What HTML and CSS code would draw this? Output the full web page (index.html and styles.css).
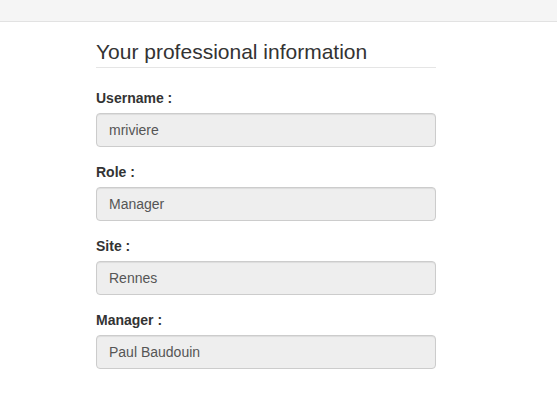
FILE: index.html
```html
<!DOCTYPE html>
<html lang="en">
<head>
<meta charset="utf-8">
<title>Your professional information</title>
<link rel="stylesheet" href="styles.css">
</head>
<body>
<div class="topbar"></div>
<main class="container">
  <form class="profile">
    <fieldset>
      <legend>Your professional information</legend>
      <div class="form-group">
        <label for="username">Username :</label>
        <input id="username" class="form-control" type="text" value="mriviere" disabled>
      </div>
      <div class="form-group">
        <label for="role">Role :</label>
        <input id="role" class="form-control" type="text" value="Manager" disabled>
      </div>
      <div class="form-group">
        <label for="site">Site :</label>
        <input id="site" class="form-control" type="text" value="Rennes" disabled>
      </div>
      <div class="form-group">
        <label for="manager">Manager :</label>
        <input id="manager" class="form-control" type="text" value="Paul Baudouin" disabled>
      </div>
    </fieldset>
  </form>
</main>
</body>
</html>
```
FILE: styles.css
```css
* { box-sizing: border-box; }
html, body { margin: 0; padding: 0; }
body {
  font-family: "Liberation Sans", Arial, Helvetica, sans-serif;
  font-size: 14px;
  line-height: 1.42857143;
  color: #333;
  background: #fff;
}
.topbar {
  height: 22px;
  background: #f5f5f5;
  border-bottom: 1px solid #e2e2e2;
}
.container {
  width: 340px;
  margin: 0 0 0 96px;
  padding-top: 15px;
}
fieldset {
  margin: 0;
  padding: 0;
  border: 0;
  min-width: 0;
}
legend {
  display: block;
  width: 100%;
  padding: 0;
  margin-bottom: 20px;
  font-size: 21px;
  line-height: 30px;
  color: #333;
  border-bottom: 1px solid #e5e5e5;
}
.form-group { margin-bottom: 15px; }
label {
  display: inline-block;
  max-width: 100%;
  margin-bottom: 5px;
  font-weight: bold;
}
.form-control {
  display: block;
  width: 100%;
  height: 34px;
  padding: 6px 12px;
  font-family: inherit;
  font-size: 14px;
  line-height: 1.42857143;
  color: #555;
  background-color: #eee;
  border: 1px solid #ccc;
  border-radius: 4px;
  box-shadow: inset 0 1px 1px rgba(0,0,0,.075);
  opacity: 1;
  margin: 0;
}
```
